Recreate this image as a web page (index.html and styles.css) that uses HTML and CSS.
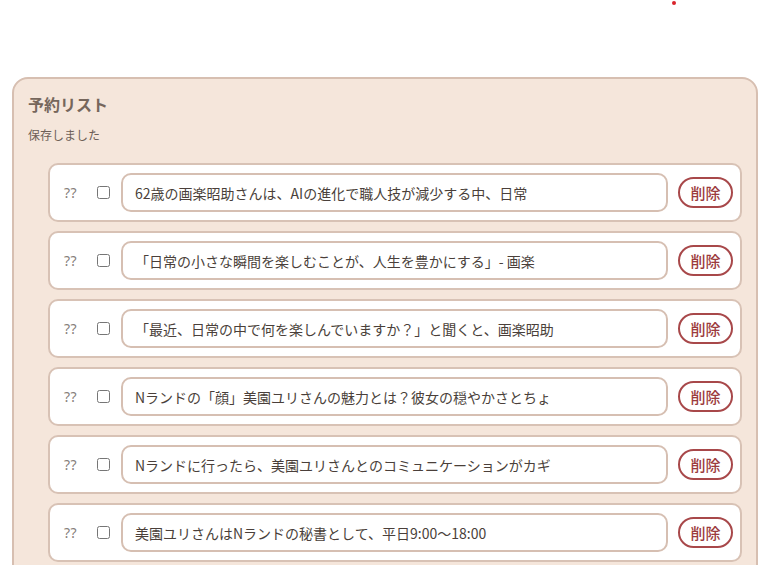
FILE: index.html
```html
<!DOCTYPE html>
<html lang="ja">
<head>
<meta charset="utf-8">
<link rel="stylesheet" href="styles.css">
</head>
<body>
<span class="dot"></span>
<section class="panel">
  <h2 class="title">予約リスト</h2>
  <p class="status">保存しました</p>
  <ul class="list">
    <li class="row"><span class="q">??</span><input class="chk" type="checkbox"><input class="field" type="text" value="62歳の画楽昭助さんは、AIの進化で職人技が減少する中、日常"><button class="del">削除</button></li>
    <li class="row"><span class="q">??</span><input class="chk" type="checkbox"><input class="field" type="text" value="「日常の小さな瞬間を楽しむことが、人生を豊かにする」- 画楽"><button class="del">削除</button></li>
    <li class="row"><span class="q">??</span><input class="chk" type="checkbox"><input class="field" type="text" value="「最近、日常の中で何を楽しんでいますか？」と聞くと、画楽昭助"><button class="del">削除</button></li>
    <li class="row"><span class="q">??</span><input class="chk" type="checkbox"><input class="field" type="text" value="Nランドの「顔」美園ユリさんの魅力とは？彼女の穏やかさとちょ"><button class="del">削除</button></li>
    <li class="row"><span class="q">??</span><input class="chk" type="checkbox"><input class="field" type="text" value="Nランドに行ったら、美園ユリさんとのコミュニケーションがカギ"><button class="del">削除</button></li>
    <li class="row"><span class="q">??</span><input class="chk" type="checkbox"><input class="field" type="text" value="美園ユリさんはNランドの秘書として、平日9:00〜18:00"><button class="del">削除</button></li>
  </ul>
</section>
</body>
</html>
```
FILE: styles.css
```css
html, body {
  margin: 0;
  padding: 0;
  background: #ffffff;
  font-family: "Noto Sans CJK JP", "Noto Sans", sans-serif;
  color: #4a3f3a;
}
body {
  padding-top: 77px;
  position: relative;
}
.dot {
  position: absolute;
  left: 672px;
  top: 1px;
  width: 4px;
  height: 4px;
  border-radius: 50%;
  background: #d9232b;
}
.panel {
  margin: 0 11px 0 12px;
  background: #f5e6db;
  border: 2px solid #d7bfb1;
  border-radius: 16px;
  padding: 13px 14px 20px 14px;
}
.title {
  margin: 0;
  font-size: 16px;
  line-height: 24px;
  font-weight: 700;
  color: #76665c;
}
.status {
  margin: 10px 0 0 0;
  font-size: 12px;
  line-height: 18px;
  color: #6d5f57;
}
.list {
  list-style: none;
  margin: 19px 0 0 0;
  padding: 0 0 0 20px;
  display: flex;
  flex-direction: column;
  gap: 9px;
}
.row {
  box-sizing: border-box;
  height: 59px;
  display: flex;
  align-items: center;
  background: #ffffff;
  border: 2px solid #d8c2b5;
  border-radius: 10px;
  padding: 0 7px 0 14px;
}
.q {
  width: 20px;
  font-size: 14px;
  color: #86807b;
  font-family: "Noto Sans", "DejaVu Sans", sans-serif;
  letter-spacing: 0.5px;
}
.chk {
  margin: 0 11px 0 13px;
  width: 13px;
  height: 13px;
}
.field {
  flex: 1;
  box-sizing: border-box;
  height: 39px;
  border: 2px solid #d6bfb2;
  border-radius: 10px;
  padding: 0 12px;
  font-family: "Noto Sans CJK JP", "Noto Sans", sans-serif;
  font-size: 14px;
  color: #4a3f3a;
  background: #ffffff;
  outline: none;
}
.del {
  box-sizing: border-box;
  margin-left: 10px;
  width: 55px;
  height: 31px;
  border: 2px solid #a8484a;
  border-radius: 16px;
  background: #ffffff;
  color: #9c3b3d;
  font-family: "Noto Sans CJK JP", sans-serif;
  font-size: 15px;
  font-weight: 500;
  padding: 0;
  line-height: 1;
}
```
